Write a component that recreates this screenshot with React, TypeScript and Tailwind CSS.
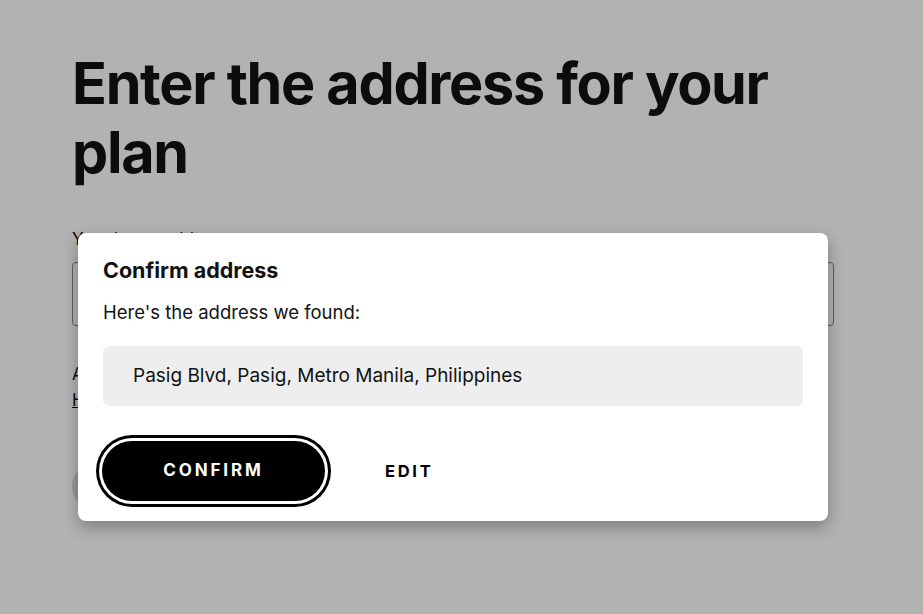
import React from "react";

const font = { fontFamily: "Inter, 'Noto Sans', sans-serif" };

function ConfirmDialog() {
  return (
    <div
      role="dialog"
      className="absolute left-[78px] top-[233px] w-[750px] h-[288px] rounded-lg bg-white px-[25px] pt-[23px] shadow-[0_6px_16px_rgba(0,0,0,0.3)]"
    >
      <h2 className="text-[21.5px] font-bold leading-[28px] text-[#121212]">Confirm address</h2>
      <p className="mt-[15px] text-[18.5px] leading-[26px] text-[#121212]">Here's the address we found:</p>
      <div className="mt-[21px] flex h-[60px] items-center rounded-md bg-[#eeeeee] px-[30px] text-[19px] text-[#121212]">
        Pasig Blvd, Pasig, Metro Manila, Philippines
      </div>
      <div className="mt-[35px] flex items-center">
        <button className="ml-[-1px] flex h-[60px] w-[223px] items-center justify-center rounded-full bg-black text-[17px] font-bold tracking-[2.9px] text-white shadow-[0_0_0_3px_#fff,0_0_0_6px_#000]">
          CONFIRM
        </button>
        <button className="ml-[60px] text-[16.5px] font-bold tracking-[2.7px] text-black">EDIT</button>
      </div>
    </div>
  );
}

export default function App() {
  return (
    <div className="relative h-[614px] w-[923px] overflow-hidden bg-white" style={font}>
      {/* form page underneath */}
      <div className="pl-[72px] pr-[90px] pt-[49px]">
        <h1 className="text-[57.5px] font-bold leading-[69px] tracking-[-1.3px] text-[#121212]">
          Enter the address for your plan
        </h1>
        <label className="mt-[40px] block text-[17px] text-[#121212]">Your home address</label>
        <div className="mt-[9px] h-[64px] w-[762px] rounded border border-[#878787]" />
        <p className="mt-[38px] text-[17px] leading-[20px] text-[#121212]">Address details</p>
        <a className="mt-[6px] block text-[17px] leading-[20px] text-[#121212] underline">How we use your address</a>
        <div className="mt-[52px] h-[48px] w-[223px] rounded-full bg-[#dbdbdb]" />
      </div>

      {/* dim layer behind the dialog */}
      <div className="absolute inset-0 bg-black/30" />

      <ConfirmDialog />
    </div>
  );
}
